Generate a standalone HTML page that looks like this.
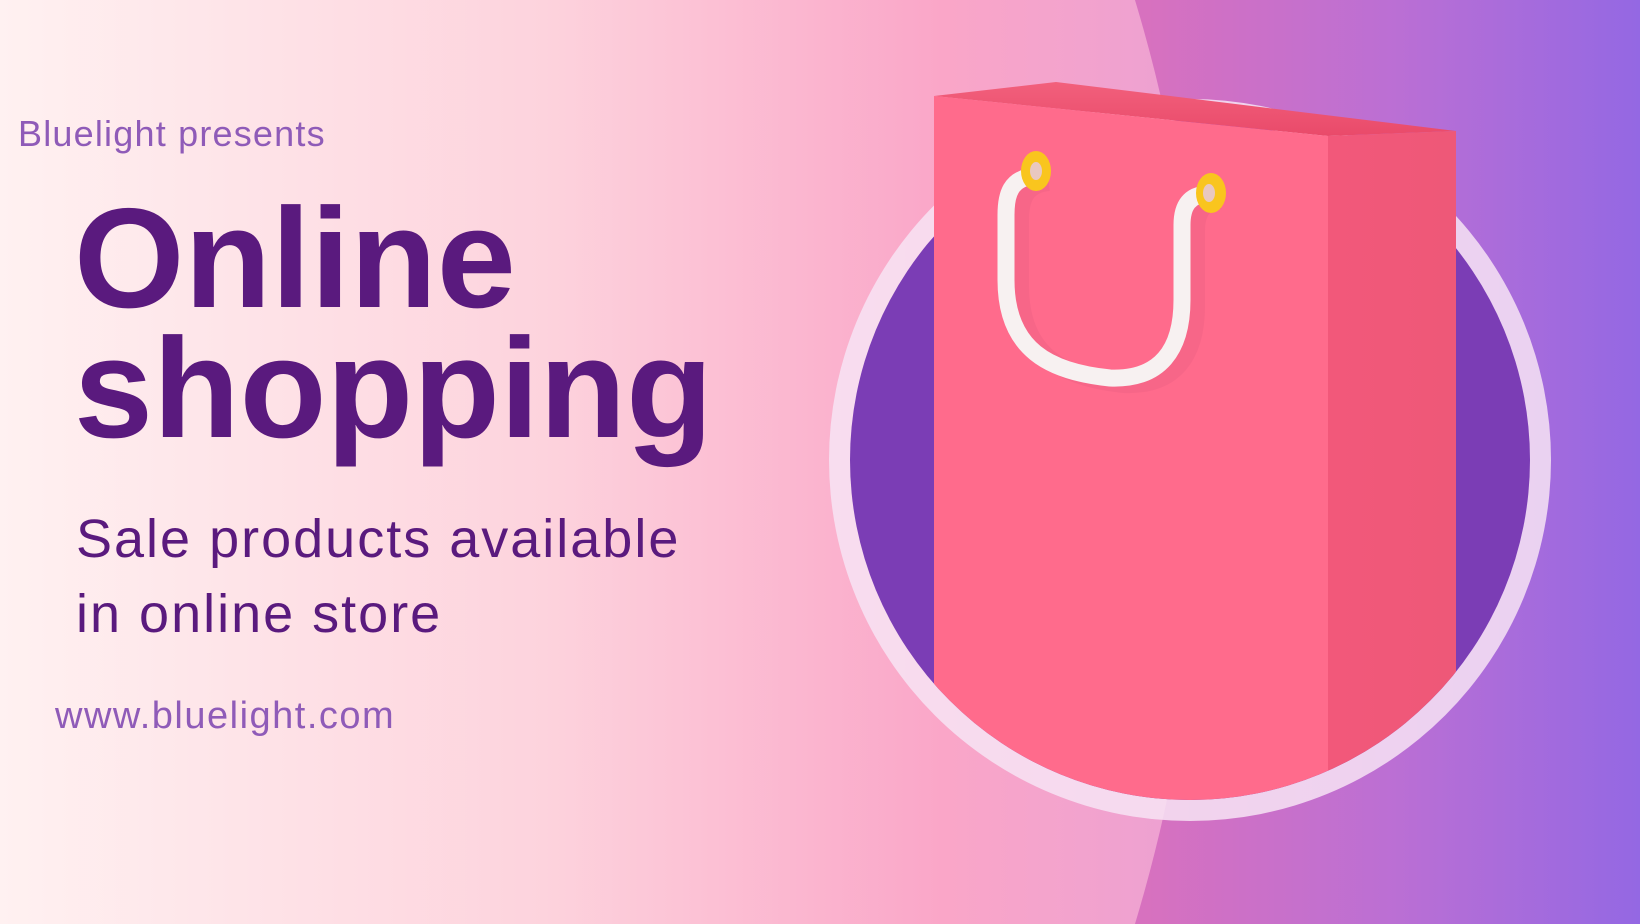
<!DOCTYPE html>
<html><head><meta charset="utf-8"><style>
html,body{margin:0;padding:0;width:1640px;height:924px;overflow:hidden}
body{position:relative;font-family:"Liberation Sans",sans-serif;
background:linear-gradient(90deg,#d771bf 0%,#d771bf 70%,#bb6fd4 85%,#9468e3 100%);}
svg{position:absolute;left:0;top:0;display:block}
.t{position:absolute;white-space:nowrap;line-height:1}
</style></head><body>
<svg width="1640" height="924" viewBox="0 0 1640 924">
<defs>
<linearGradient id="lg" gradientUnits="userSpaceOnUse" x1="0" x2="1210" y1="0" y2="0">
<stop offset="0" stop-color="#fff1f1"/><stop offset="0.45" stop-color="#fdd3dd"/><stop offset="0.78" stop-color="#faa6c8"/><stop offset="1" stop-color="#eba0d3"/>
</linearGradient>
<clipPath id="cp"><circle cx="1190" cy="460" r="340"/><rect x="900" y="0" width="600" height="460"/></clipPath>
<linearGradient id="sd" x1="0" x2="1"><stop offset="0" stop-color="#f2587a"/><stop offset="1" stop-color="#ee5878"/></linearGradient>
<linearGradient id="rim" x1="0" x2="0" y1="0" y2="1"><stop offset="0" stop-color="#f2607c"/><stop offset="1" stop-color="#e94a6a"/></linearGradient>
</defs>
<circle cx="-400" cy="462" r="1603" fill="url(#lg)"/>
<circle cx="1190" cy="460" r="361" fill="#f7e4f4" opacity="0.85"/>
<circle cx="1190" cy="460" r="340" fill="#7b3db5"/>
<g clip-path="url(#cp)">
<polygon points="934,96 1056,82 1456,131 1328,136" fill="url(#rim)"/>
<polygon points="934,96 1328,136 1328,924 934,924" fill="#ff6b8c"/>
<polygon points="1328,136 1456,131 1456,924 1328,924" fill="url(#sd)"/>
<path d="M1035,176 C1010,178 1006,195 1006,215 L1006,280 C1006,350 1050,372 1110,378 C1160,380 1182,350 1182,300 L1182,225 C1182,205 1190,195 1207,194" fill="none" stroke="#e55e80" stroke-width="18" opacity="0.3" transform="translate(14,6)"/>
<path d="M1035,176 C1010,178 1006,195 1006,215 L1006,280 C1006,350 1050,372 1110,378 C1160,380 1182,350 1182,300 L1182,225 C1182,205 1190,195 1207,194" fill="none" stroke="#f7f1f1" stroke-width="17" stroke-linecap="round"/>
</g>
<ellipse cx="1036" cy="171" rx="15" ry="20" fill="#f9c51e"/><ellipse cx="1036" cy="171" rx="6" ry="9" fill="#e9c8c0"/>
<ellipse cx="1211" cy="193" rx="15" ry="20" fill="#f9c51e"/><ellipse cx="1209" cy="193" rx="6" ry="9" fill="#e9c8c0"/>
</svg>
<div class="t" style="left:18px;top:116px;font-size:36px;letter-spacing:1.2px;color:#8f5bb8">Bluelight presents</div>
<div class="t" style="left:74px;top:194px;font-size:142px;font-weight:bold;color:#5a1a7e;line-height:130px">Online<br>shopping</div>
<div class="t" style="left:76px;top:502px;font-size:54px;letter-spacing:2px;color:#5a1a7e;line-height:75px">Sale products available<br>in online store</div>
<div class="t" style="left:55px;top:697px;font-size:38px;letter-spacing:1.5px;color:#8f5bb8">www.bluelight.com</div>
</body></html>
